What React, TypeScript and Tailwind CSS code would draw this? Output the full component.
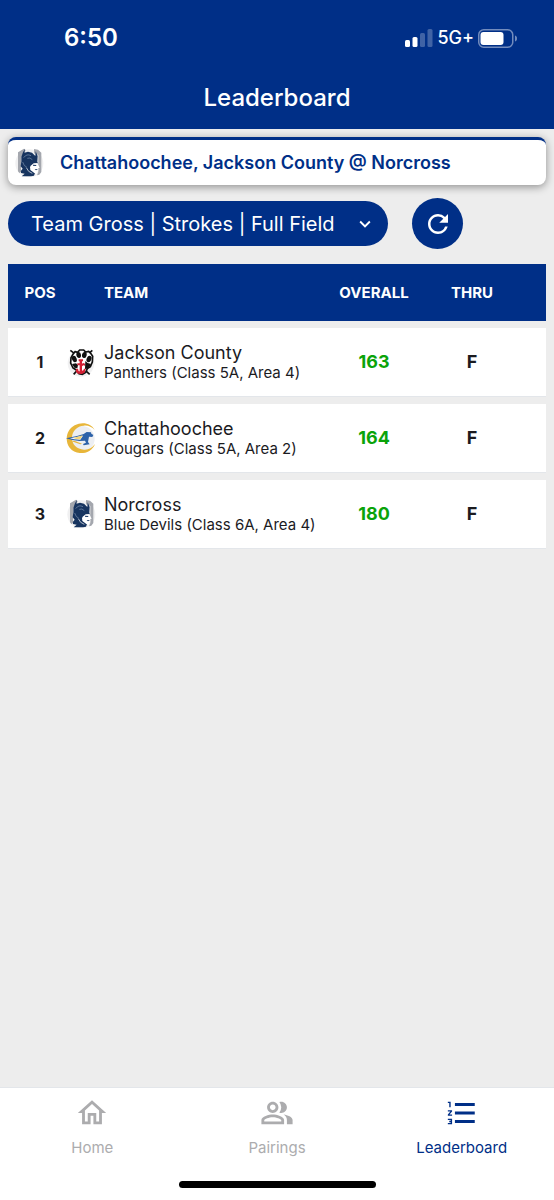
import type { ReactNode } from "react";
import type { IconType } from "react-icons";
import {
  MdFormatListNumbered,
  MdKeyboardArrowDown,
  MdOutlineHome,
  MdOutlinePeopleAlt,
  MdRefresh,
} from "react-icons/md";

interface Team {
  pos: number;
  name: string;
  detail: string;
  overall: number;
  thru: string;
  logo: ReactNode;
}

interface Tab {
  label: string;
  icon: IconType;
  active?: boolean;
}

function PanthersLogo() {
  return (
    <svg viewBox="18 24 90 90" className="size-[30px] shrink-0" aria-hidden="true">
      <circle cx="63" cy="73" r="40" fill="#f1f1f2" />
      <path d="M31 34l13 10M97 34L86 44M41 106l10-11M89 106L76 94" stroke="#111" strokeWidth="5" />
      <path
        d="M45 38l8 2 6-7h12l6 6 9-2 6 6 6 9-1 17-6 14-9 6-5 11-10 6-10-2-8-11-10-6-7-15 1-16 6-10z"
        fill="#fff"
        stroke="#111"
        strokeWidth="5"
      />
      <ellipse cx="43" cy="60" rx="7" ry="10" fill="#111" transform="rotate(-22 43 60)" />
      <ellipse cx="56" cy="48" rx="7" ry="9" fill="#111" transform="rotate(-8 56 48)" />
      <ellipse cx="73" cy="48" rx="7" ry="9" fill="#111" transform="rotate(12 73 48)" />
      <ellipse cx="87" cy="60" rx="7" ry="10" fill="#111" transform="rotate(24 87 60)" />
      <path d="M36 75l12-2 6 5-2 10-9-2zM76 66l7 6 10 3-6 11-12 5z" fill="#111" />
      <path
        d="M56 61h13v6h-3v7l4-2 5 2v6l-5-1-4 3v13l4-1 2-5h5l-3 12-9 4-12-1-6-7 2-8h5l2 8h3V79h-7v-6h7v-6h-3z"
        fill="#d32034"
      />
    </svg>
  );
}

function CougarsLogo() {
  return (
    <svg viewBox="18 24 90 90" className="size-[30px] shrink-0" aria-hidden="true">
      <circle cx="66" cy="71" r="38" fill="#eceef2" />
      <path
        d="M104 45C94 25 67 19 44 31C19 44 13 77 29 98c16 20 47 21 64 6 6-5 10-11 12-17-9 12-20 18-33 17-22-1-36-16-36-35 0-21 15-36 36-37 13-1 24 4 32 13z"
        fill="#e8b63a"
      />
      <path d="M18 70l33-7 20-6 9-6 13 1 1 4 6 4-3 6-10-1-3 16 5 7-18 3-2-4 9-4-3-6-17 1-21-3z" fill="#2d62a9" />
      <path d="M30 70l20-4 19-4-8 12-18-1z" fill="#fff" />
      <path d="M40 69l28-8-7 12-13-1z" fill="#f4d47b" />
      <path d="M43 77l23 9-5 2-26-9z" fill="#e8b63a" />
    </svg>
  );
}

function BlueDevilsLogo() {
  return (
    <svg viewBox="18 27 90 90" className="size-[30px] shrink-0" aria-hidden="true">
      <circle cx="64" cy="73" r="42" fill="#f0f0f1" />
      <path d="M30 40l18-11 5 4-4 10-10 13v43l-5 3-4-5z" fill="#a4a7ae" />
      <path d="M78 30l12 2 10 9v58l-6 8-7 2 4-10V48l-13-5z" fill="#a4a7ae" />
      <path
        d="M51 29l-2 12 11-3 12 3 10 10 1-14 6 14-1 17 3 8-13-1-10 9-1 9 14 9-3 8-9 2H41l9-8-11-2 0-7 5-6-6-7 2-15 0-13 5-14z"
        fill="#17345f"
      />
      <path d="M68 80l9-7 12-1 2 7 4 7-5 2 1 6-3 4-2 8-8-5-10-9-2-7z" fill="#fff" />
      <path d="M75 77l11 1-3 3-8-1zM80 90l10 1-6 3z" fill="#17345f" />
      <path d="M47 56q9-13 22-6M58 58q8-4 15 4M44 69q4 14 12 15" stroke="#8096b2" strokeWidth="2" fill="none" />
      <path d="M55 86l7 11 11 6" stroke="#fff" strokeWidth="2" fill="none" />
    </svg>
  );
}

const teams: Team[] = [
  { pos: 1, name: "Jackson County", detail: "Panthers (Class 5A, Area 4)", overall: 163, thru: "F", logo: <PanthersLogo /> },
  { pos: 2, name: "Chattahoochee", detail: "Cougars (Class 5A, Area 2)", overall: 164, thru: "F", logo: <CougarsLogo /> },
  { pos: 3, name: "Norcross", detail: "Blue Devils (Class 6A, Area 4)", overall: 180, thru: "F", logo: <BlueDevilsLogo /> },
];

const tabs: Tab[] = [
  { label: "Home", icon: MdOutlineHome },
  { label: "Pairings", icon: MdOutlinePeopleAlt },
  { label: "Leaderboard", icon: MdFormatListNumbered, active: true },
];

function StatusBar() {
  return (
    <div className="flex h-[76px] items-center justify-between pl-16 pr-[37px]">
      <span className="text-2xl font-semibold">6:50</span>
      <div className="flex items-center gap-1">
        <svg viewBox="0 0 28 18" className="h-[18px] w-7" fill="#fff" aria-hidden="true">
          <rect x="0" y="11" width="5" height="7" rx="1.5" />
          <rect x="7.5" y="8" width="5" height="10" rx="1.5" />
          <rect x="15" y="4" width="5" height="14" rx="1.5" opacity="0.25" />
          <rect x="22.5" y="0" width="5" height="18" rx="1.5" opacity="0.25" />
        </svg>
        <span className="text-lg font-medium">5G+</span>
        <svg viewBox="0 0 39 19" className="h-[19px] w-[39px]" aria-hidden="true">
          <rect x="0.75" y="0.75" width="34" height="17.5" rx="5" fill="none" stroke="#fff" strokeOpacity="0.45" strokeWidth="1.5" />
          <rect x="2.5" y="3" width="23" height="13" rx="3" fill="#fff" />
          <path d="M37 6.5c1.7.6 2 1.7 2 3s-.3 2.4-2 3z" fill="#fff" fillOpacity="0.45" />
        </svg>
      </div>
    </div>
  );
}

function TeamRow({ team }: { team: Team }) {
  return (
    <tr className="h-[69px] bg-white">
      <td className="border-b border-gray-300/60 pl-1.5 text-center text-base font-bold">{team.pos}</td>
      <td className="border-b border-gray-300/60">
        <div className="flex items-center gap-2">
          {team.logo}
          <div className="pt-0.5">
            <div className="text-lg leading-5">{team.name}</div>
            <div className="text-[15px] leading-5">{team.detail}</div>
          </div>
        </div>
      </td>
      <td className="border-b border-gray-300/60 text-center text-lg font-bold text-[#0aa30a]">{team.overall}</td>
      <td className="border-b border-gray-300/60 pr-[25px] text-center text-lg font-bold">{team.thru}</td>
    </tr>
  );
}

export default function App() {
  return (
    <div className="flex min-h-screen flex-col bg-[#ededed] font-['Inter',sans-serif] text-[#1b1b1f]">
      <header className="bg-[#002f87] pb-[11px] text-white">
        <StatusBar />
        <h1 className="pt-0.5 text-center text-2xl leading-10 font-medium">Leaderboard</h1>
      </header>

      <main className="grow px-2 pt-2">
        <div className="flex h-12 items-center gap-4 rounded-lg border-t-3 border-[#002f87] bg-white pl-1.5 shadow-[0_2px_8px_rgba(0,0,0,0.4)]">
          <BlueDevilsLogo />
          <h2 className="text-lg font-semibold text-[#002f87]">Chattahoochee, Jackson County @ Norcross</h2>
        </div>

        <div className="mt-[13px] flex items-center gap-6">
          <div className="relative">
            <select
              aria-label="Leaderboard view"
              className="block h-[45px] w-[380px] appearance-none rounded-full bg-[#002f87] pr-12 pl-[23px] text-xl text-white"
            >
              <option>Team Gross | Strokes | Full Field</option>
            </select>
            <MdKeyboardArrowDown className="pointer-events-none absolute top-3 right-3 size-[22px] text-white" />
          </div>
          <button type="button" aria-label="Refresh" className="flex size-[51px] items-center justify-center rounded-full bg-[#002f87] text-white">
            <MdRefresh className="size-[30px]" />
          </button>
        </div>

        <table className="mt-2 w-full table-fixed border-separate border-spacing-x-0 border-spacing-y-[7px]">
          <colgroup>
            <col className="w-[58px]" />
            <col />
            <col className="w-[98px]" />
            <col className="w-[123px]" />
          </colgroup>
          <thead>
            <tr className="h-[57px] bg-[#002f87] text-[15px] text-white">
              <th className="pt-0.5 pl-1.5 font-bold">POS</th>
              <th className="pt-0.5 pl-[38px] text-left font-bold">TEAM</th>
              <th className="pt-0.5 font-bold">OVERALL</th>
              <th className="pt-0.5 pr-[25px] font-bold">THRU</th>
            </tr>
          </thead>
          <tbody>
            {teams.map((team) => (
              <TeamRow key={team.pos} team={team} />
            ))}
          </tbody>
        </table>
      </main>

      <footer className="border-t border-gray-300/60 bg-white pt-2">
        <nav className="grid grid-cols-3">
          {tabs.map(({ label, icon: Icon, active }) => (
            <a
              key={label}
              href="#"
              aria-current={active ? "page" : undefined}
              className={`flex flex-col items-center gap-2 text-[15px] leading-5 ${active ? "text-[#002f87]" : "text-[#acacae]"}`}
            >
              <Icon className="size-[34px]" />
              {label}
            </a>
          ))}
        </nav>
        <div className="mx-auto mt-[23px] mb-3 h-[7px] w-[197px] rounded-full bg-black" />
      </footer>
    </div>
  );
}
